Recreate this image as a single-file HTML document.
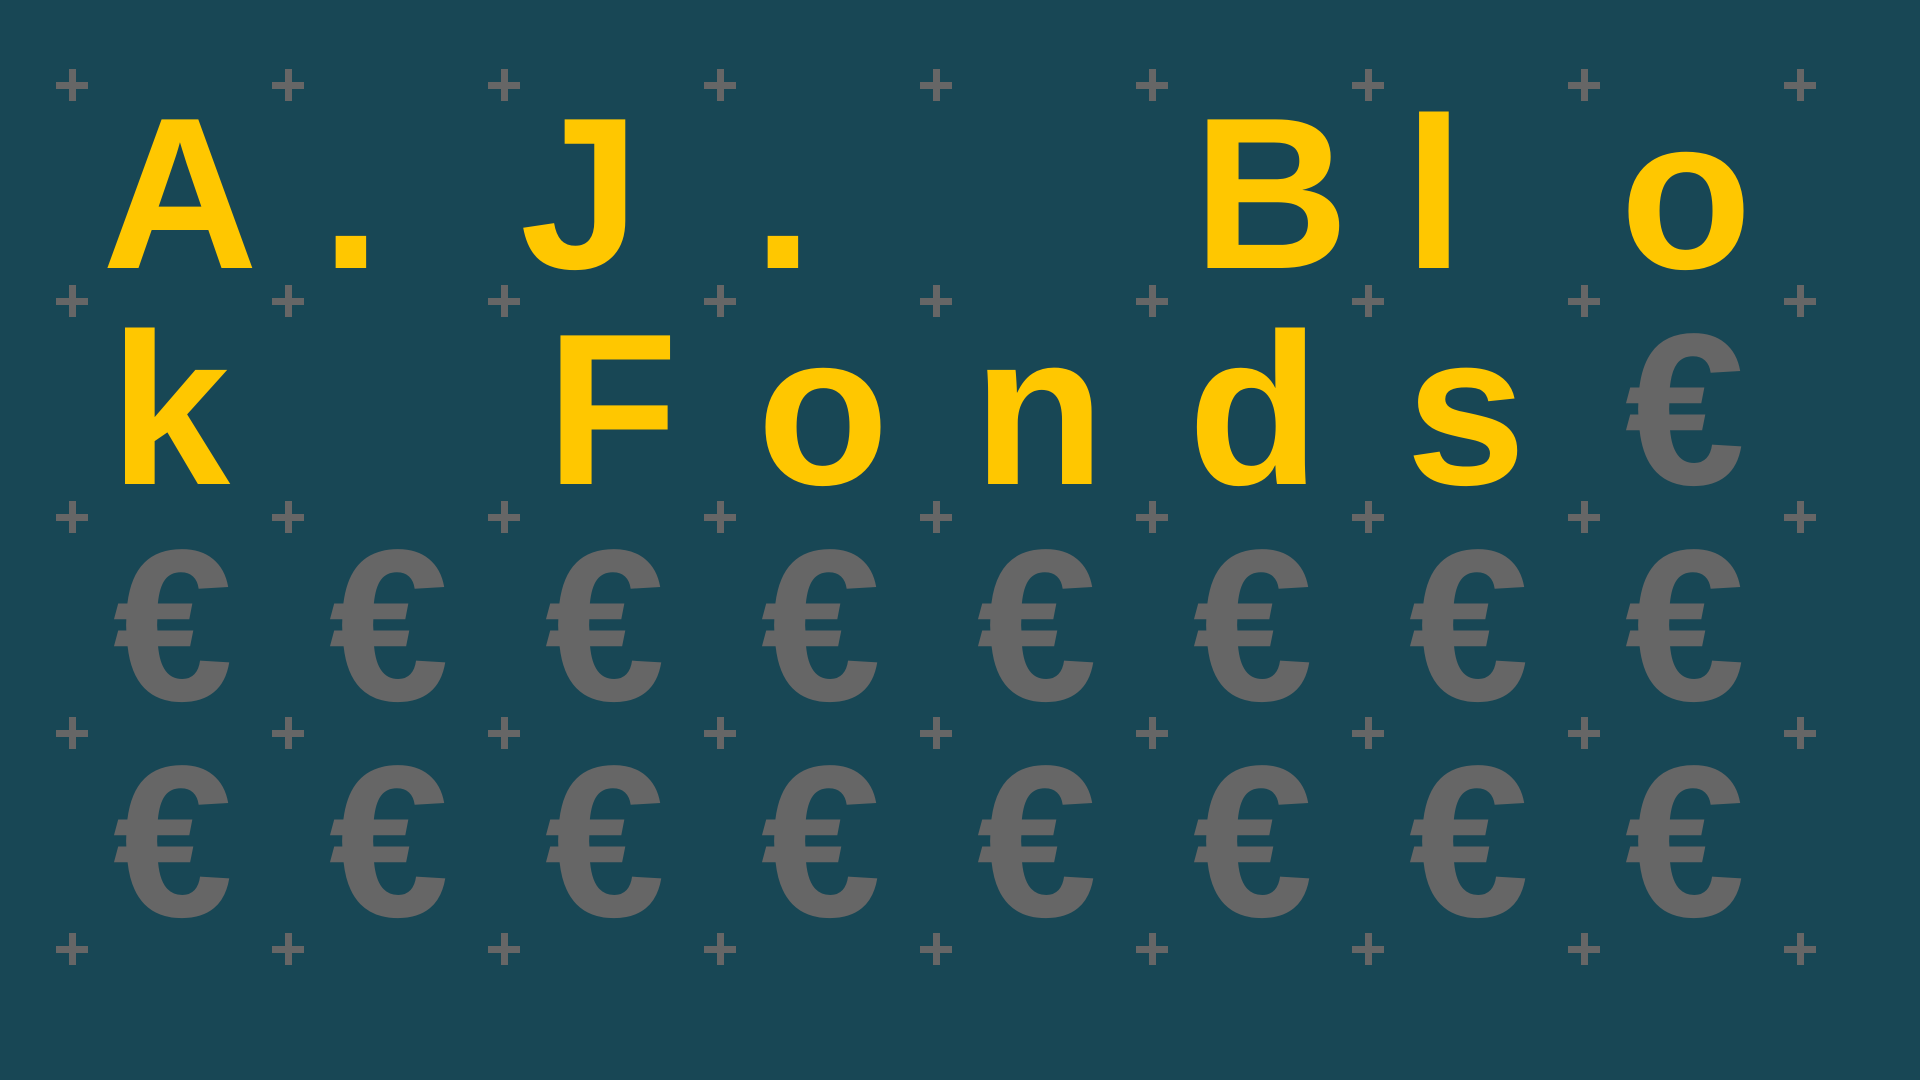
<!DOCTYPE html>
<html><head><meta charset="utf-8"><style>
html,body{margin:0;padding:0;}
body{width:1920px;height:1080px;background:#184755;position:relative;overflow:hidden;font-family:"Liberation Sans",sans-serif;}
.p{position:absolute;width:32px;height:32px;}
.p:before{content:"";position:absolute;left:13px;top:0;width:7px;height:32px;background:#666;}
.p:after{content:"";position:absolute;top:13px;left:0;height:7px;width:32px;background:#666;}
.c{position:absolute;width:216px;height:216px;line-height:216px;font-size:216px;font-weight:bold;text-align:center;}
.y{color:#ffc700}.g{color:#666666;margin-left:-7px}
</style></head><body>
<div id="g"></div>
<script>
var h='';
for(var i=0;i<9;i++)for(var j=0;j<5;j++){h+='<div class="p" style="left:'+(72+216*i-16)+'px;top:'+(85+216*j-16)+'px"></div>';}
document.getElementById('g').innerHTML=h;
</script>
<div class="c y" style="left:72px;top:85px">A</div>
<div class="c y" style="left:288px;top:85px;margin-left:-45px">.</div>
<div class="c y" style="left:504px;top:85px;margin-left:-32px">J</div>
<div class="c y" style="left:720px;top:85px;margin-left:-45px">.</div>
<div class="c y" style="left:1152px;top:85px;margin-left:11px">B</div>
<div class="c y" style="left:1368px;top:85px;margin-left:-42px">l</div>
<div class="c y" style="left:1584px;top:85px;margin-left:-6px">o</div>
<div class="c y" style="left:72px;top:301px;margin-left:-10px">k</div>
<div class="c y" style="left:504px;top:301px">F</div>
<div class="c y" style="left:720px;top:301px;margin-left:-5px">o</div>
<div class="c y" style="left:936px;top:301px;margin-left:-5px">n</div>
<div class="c y" style="left:1152px;top:301px;margin-left:-6px">d</div>
<div class="c y" style="left:1368px;top:301px;margin-left:-10px">s</div>
<div class="c g" style="left:1584px;top:301px">€</div>
<div class="c g" style="left:72px;top:517px">€</div>
<div class="c g" style="left:288px;top:517px">€</div>
<div class="c g" style="left:504px;top:517px">€</div>
<div class="c g" style="left:720px;top:517px">€</div>
<div class="c g" style="left:936px;top:517px">€</div>
<div class="c g" style="left:1152px;top:517px">€</div>
<div class="c g" style="left:1368px;top:517px">€</div>
<div class="c g" style="left:1584px;top:517px">€</div>
<div class="c g" style="left:72px;top:733px">€</div>
<div class="c g" style="left:288px;top:733px">€</div>
<div class="c g" style="left:504px;top:733px">€</div>
<div class="c g" style="left:720px;top:733px">€</div>
<div class="c g" style="left:936px;top:733px">€</div>
<div class="c g" style="left:1152px;top:733px">€</div>
<div class="c g" style="left:1368px;top:733px">€</div>
<div class="c g" style="left:1584px;top:733px">€</div>
</body></html>
